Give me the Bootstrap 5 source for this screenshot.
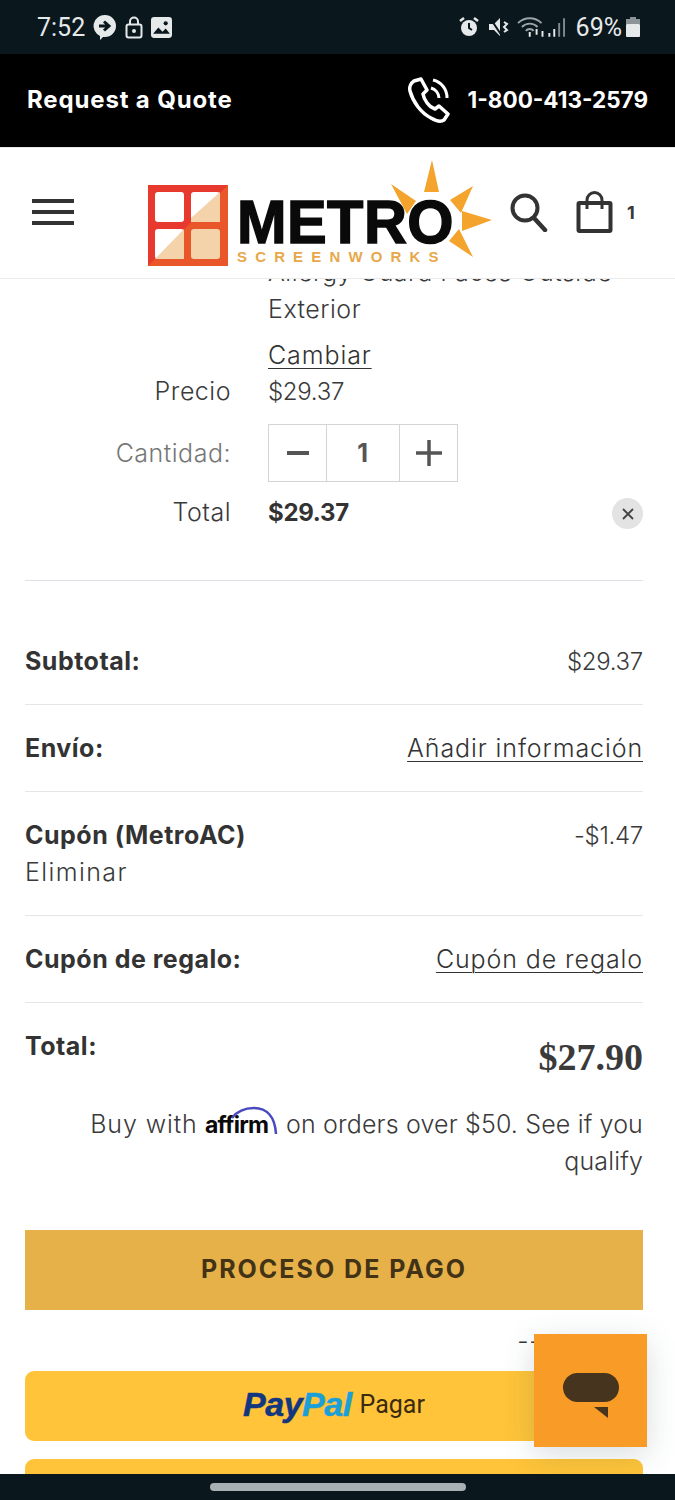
<!DOCTYPE html>
<html lang="es">
<head>
  <meta charset="UTF-8">
  <meta name="viewport" content="width=device-width, initial-scale=1">
  <title>Carrito</title>
  <link href="https://cdn.jsdelivr.net/npm/bootstrap@5.3.0/dist/css/bootstrap.min.css" rel="stylesheet">
  <style>
    body { background:#fff; color:#3a3a3a; font-family:Inter,"Liberation Sans",sans-serif; font-size:25px; font-weight:300; letter-spacing:.5px; line-height:37px; }
    b { font-weight:700; color:#333; }
    .phone { width:675px; height:1500px; overflow:hidden; }
    .status-bar { height:54px; background:#0a171d; color:#e6e9ea; font-family:Roboto,sans-serif; font-size:25px; font-weight:400; letter-spacing:0; padding:0 35px 0 37px; }
    .top-bar { height:93px; background:#000; color:#fff; font-weight:700; font-size:24px; letter-spacing:.85px; padding:0 27px 2px; }
    .phone-num { font-size:22.5px; letter-spacing:0; }
    .site-head { height:132px; background:#fff; border-top:1px solid #e8e8e8; border-bottom:1px solid #eaeaea; position:relative; z-index:2; padding:0 32px; }
    .burger { width:42px; margin-top:-2px; }
    .burger span { display:block; height:4px; background:#333; margin-bottom:7px; }
    .burger span:last-child { margin-bottom:0; }
    .logo-box { margin-left:73px; margin-top:2px; }
    .head-icons { margin-left:17px; margin-top:-2px; }
    .bag-icon { margin-left:28px; }
    .cart-count { font-size:18px; font-weight:700; margin-left:13px; letter-spacing:0; }
    .cart-wrap { padding:0 32px 0 25px; margin-top:-25px; min-height:0; }
    .item-line { display:flex; }
    .item-label { width:206px; text-align:right; flex:none; }
    .item-val { margin-left:37px; flex:1; }
    .cut-line { height:37px; overflow:hidden; white-space:nowrap; }
    .change-row { margin-top:9px; }
    .price-row { margin-top:-1px; }
    .qty-row { margin-top:14px; }
    .total-row { margin-top:12px; padding-bottom:8px; }
    .amt { font-size:24px; letter-spacing:-.3px; }
    .qty-label { color:#777; }
    .change-link, .plain-link { color:#333; letter-spacing:.9px; text-decoration:underline; text-underline-offset:4px; text-decoration-thickness:1px; }
    .qty-box { width:190px; height:58px; border:1px solid #d4d4d4; }
    .qty-btn { width:57px; height:100%; }
    .qty-num { flex:1; height:100%; border-left:1px solid #d4d4d4; border-right:1px solid #d4d4d4; font-weight:700; color:#555; }
    .remove-x { width:31px; height:31px; border-radius:50%; background:#e3e3e3; margin-bottom:2px; }
    .item-rule { margin-top:41px; }
    .sum-row { border-bottom:1px solid #e6e6e6; padding:25px 0 24px; }
    .sum-first { margin-top:62px; padding-top:0; }
    .sum-total { padding-top:25px; }
    .total-amt { font-family:"Liberation Serif",serif; font-weight:700; font-size:38px; line-height:44px; margin-top:7px; letter-spacing:0; }
    .coupon-del { letter-spacing:1.4px; }
    .pay-note { text-align:right; margin-top:27px; letter-spacing:.15px; }
    .buy-with { letter-spacing:.9px; }
    .affirm-logo { vertical-align:-5px; overflow:visible; }
    .checkout-btn { height:80px; background:#e7b14a; color:#423316; font-weight:700; font-size:25px; letter-spacing:2px; margin-top:50px; border:0; border-radius:0; }
    .or-line { height:61px; line-height:62px; text-align:right; padding-right:102px; }
    .pp-btn { height:70px; background:#ffc439; border-radius:9px; }
    .pp-first { padding-bottom:4px; }
    .pp-next { margin-top:18px; }
    .pp-word { font-family:"Liberation Sans",sans-serif; font-style:italic; font-weight:700; font-size:34px; letter-spacing:-0.5px; -webkit-text-stroke:.5px currentColor; }
    .pp-dark { color:#12367f; }
    .pp-light { color:#1b9fd8; }
    .pp-pagar { font-family:Roboto,sans-serif; font-size:25px; font-weight:400; letter-spacing:0; color:#3a2a10; margin-left:8px; }
    .nav-strip { position:absolute; left:0; right:0; top:1474px; height:26px; background:#0a171d; z-index:3; }
    .nav-pill { width:256px; height:8px; border-radius:4px; background:#a9b1b4; }
    .chat-fab { position:absolute; left:534px; top:1334px; width:113px; height:113px; background:#f89c27; z-index:2; box-shadow:0 8px 30px rgba(40,70,80,.18); }
    .chat-bubble { margin-top:39px; }
    .st-gap { margin-left:10px; }
    .batt-gap { margin-left:4px; }
  </style>
</head>
<body>
  <div class="phone position-relative d-flex flex-column">
    <div class="status-bar flex-shrink-0 d-flex align-items-center justify-content-between">
      <div class="d-flex align-items-center gap-2">
        <span>7:52</span>
        <svg width="24" height="26" viewBox="0 0 24 26"><path d="M12 1a11 11 0 0 1 0 22H10l-3 3v-4A11 11 0 0 1 12 1z" fill="#e6e9ea"/><path d="M6 12h9M11 7.500l5 4.500-5 4.500" fill="none" stroke="#0a171d" stroke-width="3"/></svg>
        <svg width="18" height="23" viewBox="0 0 18 23"><rect x="1.500" y="8.500" width="15" height="13" rx="2" fill="none" stroke="#e6e9ea" stroke-width="2"/><path d="M5 8.500V5.500a4 4 0 0 1 8 0v3" fill="none" stroke="#e6e9ea" stroke-width="2"/><circle cx="9" cy="15" r="2" fill="#e6e9ea"/></svg>
        <svg width="21" height="21" viewBox="0 0 20 20"><rect width="20" height="20" rx="3" fill="#e6e9ea"/><path d="M2 16l5-6 4 4 3-3 4 5z" fill="#0a171d"/><circle cx="14" cy="6" r="2" fill="#0a171d"/></svg>
      </div>
      <div class="d-flex align-items-center">
        <svg width="20" height="22" viewBox="0 0 20 22"><circle cx="10" cy="12" r="8" fill="#e6e9ea"/><path d="M10 7v5l3 2" fill="none" stroke="#0a171d" stroke-width="2"/><path d="M1 5l4-3M19 5l-4-3" stroke="#e6e9ea" stroke-width="2.500"/></svg>
        <svg class="st-gap" width="20" height="22" viewBox="0 0 20 22"><path d="M0 8h5l6-6v18l-6-6H0z" fill="#e6e9ea"/><path d="M1 2l12 18" stroke="#0a171d" stroke-width="2"/><path d="M15 6l3 2-3 3 3 3-3 2" fill="none" stroke="#e6e9ea" stroke-width="2"/></svg>
        <svg class="ms-2" width="49" height="24" viewBox="0 0 50 24"><path d="M1 8a17 17 0 0 1 24 0M5 12a11 11 0 0 1 16 0M9 16a5 5 0 0 1 8 0" fill="none" stroke="#9ba3a6" stroke-width="2"/><path d="M13 17v5M20 14v6M26 16v6" stroke="#e6e9ea" stroke-width="2"/><path d="M33 22v-4M38 22v-8" stroke="#e6e9ea" stroke-width="2"/><path d="M43 22V8M48 22V3" stroke="#7f888c" stroke-width="2"/></svg>
        <span class="st-gap">69%</span>
        <svg class="batt-gap" width="14" height="20" viewBox="0 0 14 20"><rect x="4" y="0" width="6" height="3" fill="#8d9497"/><rect y="2" width="14" height="5" fill="#8d9497"/><rect y="7" width="14" height="13" rx="1" fill="#e6e9ea"/></svg>
      </div>
    </div>

    <div class="top-bar flex-shrink-0 d-flex align-items-center justify-content-between">
      <span>Request a Quote</span>
      <div class="d-flex align-items-center">
        <svg width="46" height="46" viewBox="0 0 46 46"><path d="M8 4l7-2 6 11-4 4c1 6 6 13 12 15l4-3 9 8-4 6c-3 2-8 1-13-2C15 36 7 25 4 14c-1-4 1-8 4-10z" fill="none" stroke="#fff" stroke-width="3.500" stroke-linejoin="round"/><path d="M25 11a11 11 0 0 1 8 10M27 3a18 18 0 0 1 14 18" fill="none" stroke="#fff" stroke-width="3"/></svg>
        <span class="ms-3 phone-num">1-800-413-2579</span>
      </div>
    </div>

    <div class="site-head flex-shrink-0 d-flex align-items-center">
      <div class="burger"><span></span><span></span><span></span></div>
      <div class="logo-box">
        <svg width="346" height="108" viewBox="0 0 346 108">
          <rect x="1" y="25" width="80" height="81" fill="#e8392e"/>
          <path d="M81 25v81H1z" fill="#e8562a"/>
          <rect x="8" y="32" width="29" height="30" rx="3" fill="#fff"/>
          <rect x="44" y="32" width="29" height="30" rx="3" fill="#fff"/>
          <path d="M73 32v30H44v-4z" fill="#f4d3ab"/>
          <rect x="8" y="69" width="29" height="30" rx="3" fill="#fff"/>
          <path d="M37 69v30H8z" fill="#f4d3ab"/>
          <rect x="44" y="69" width="29" height="30" rx="3" fill="#f4d3ab"/>
          <g fill="#f4a32d">
            <path d="M285 0l7 32h-15zM244 24l25 17-9 13zM326 26l-12 27-11-13zM345 60l-30 11V51zM326 97l-24-16 10-12z"/>
          </g>
          <text x="90" y="83" font-family="Liberation Sans, sans-serif" font-weight="700" font-size="62" fill="#0a0a0a" stroke="#0a0a0a" stroke-width="1.500" textLength="217" lengthAdjust="spacingAndGlyphs">METRO</text>
          <text x="90" y="102" font-family="Liberation Sans, sans-serif" font-weight="700" font-size="15" fill="#e8a84a" textLength="202" lengthAdjust="spacing">SCREENWORKS</text>
        </svg>
      </div>
      <div class="head-icons d-flex align-items-center">
        <svg width="38" height="40" viewBox="0 0 38 40"><circle cx="15" cy="16" r="12.500" fill="none" stroke="#333" stroke-width="4"/><path d="M24 26l11 12" stroke="#333" stroke-width="4.500" stroke-linecap="round"/></svg>
        <svg class="bag-icon" width="38" height="42" viewBox="0 0 38 42"><rect x="2.500" y="12" width="32" height="28" rx="1" fill="none" stroke="#333" stroke-width="4"/><path d="M11 18V9a7.500 7.500 0 0 1 15 0v9" fill="none" stroke="#333" stroke-width="3"/></svg>
        <span class="cart-count">1</span>
      </div>
    </div>

    <main class="cart-wrap flex-grow-1">
      <div class="item-line">
        <div class="item-label"></div>
        <div class="item-val">
          <div class="cut-line">Allergy Guard Faces Outside</div>
          <div>Exterior</div>
          <div class="change-row"><a class="change-link" href="#">Cambiar</a></div>
        </div>
      </div>
      <div class="item-line price-row">
        <div class="item-label">Precio</div>
        <div class="item-val amt">$29.37</div>
      </div>
      <div class="item-line align-items-center qty-row">
        <div class="item-label qty-label">Cantidad:</div>
        <div class="item-val">
          <div class="qty-box d-flex align-items-center">
            <div class="qty-btn d-flex align-items-center justify-content-center">
              <svg width="22" height="4"><rect width="22" height="4" fill="#555"/></svg>
            </div>
            <div class="qty-num d-flex align-items-center justify-content-center">1</div>
            <div class="qty-btn d-flex align-items-center justify-content-center">
              <svg width="26" height="26"><path d="M13 0v26M0 13h26" stroke="#555" stroke-width="3.500"/></svg>
            </div>
          </div>
        </div>
      </div>
      <div class="item-line total-row">
        <div class="item-label">Total</div>
        <div class="item-val d-flex justify-content-between align-items-end">
          <b class="amt">$29.37</b>
          <span class="remove-x d-flex align-items-center justify-content-center">
            <svg width="12" height="12"><path d="M1 1l10 10M11 1L1 11" stroke="#444" stroke-width="1.800"/></svg>
          </span>
        </div>
      </div>

      <div class="border-bottom item-rule"></div>

      <div class="sum-row sum-first d-flex justify-content-between">
        <b>Subtotal:</b><span class="amt">$29.37</span>
      </div>
      <div class="sum-row d-flex justify-content-between">
        <b>Envío:</b><a class="plain-link" href="#">Añadir información</a>
      </div>
      <div class="sum-row d-flex justify-content-between">
        <div><b>Cupón (MetroAC)</b><br><span class="coupon-del">Eliminar</span></div><span class="amt">-$1.47</span>
      </div>
      <div class="sum-row d-flex justify-content-between">
        <b>Cupón de regalo:</b><a class="plain-link" href="#">Cupón de regalo</a>
      </div>
      <div class="sum-total d-flex justify-content-between">
        <b>Total:</b><span class="total-amt">$27.90</span>
      </div>
      <div class="pay-note">
        <span class="buy-with">Buy with</span>
        <svg class="affirm-logo" width="74" height="32" viewBox="0 0 74 32">
          <text x="0" y="27" font-family="Inter, sans-serif" font-weight="700" font-size="23" letter-spacing="0" fill="#0a0a0a" textLength="64">affirm</text>
          <path d="M27 12C33 4 41 2 49 2c13 0 21 9 22 26" fill="none" stroke="#4a4ac0" stroke-width="2.500"/>
        </svg>
        on orders over $50. See if you qualify
      </div>
      <button class="btn checkout-btn w-100 d-flex align-items-center justify-content-center" type="button">PROCESO DE PAGO</button>
      <div class="or-line">--</div>
      <div class="pp-btn pp-first d-flex align-items-center justify-content-center">
        <span class="pp-word"><span class="pp-dark">Pay</span><span class="pp-light">Pal</span></span>
        <span class="pp-pagar">Pagar</span>
      </div>
      <div class="pp-btn pp-next"></div>
    </main>

    <div class="chat-fab d-flex align-items-start justify-content-center">
      <svg class="chat-bubble" width="58" height="46" viewBox="0 0 58 46"><rect x="1" y="0" width="56" height="29" rx="14.500" fill="#47341f"/><path d="M32 34h14v11z" fill="#47341f"/></svg>
    </div>
    <div class="nav-strip d-flex align-items-center justify-content-center"><div class="nav-pill"></div></div>
  </div>
  <script src="https://cdn.jsdelivr.net/npm/bootstrap@5.3.0/dist/js/bootstrap.bundle.min.js"></script>
</body>
</html>
